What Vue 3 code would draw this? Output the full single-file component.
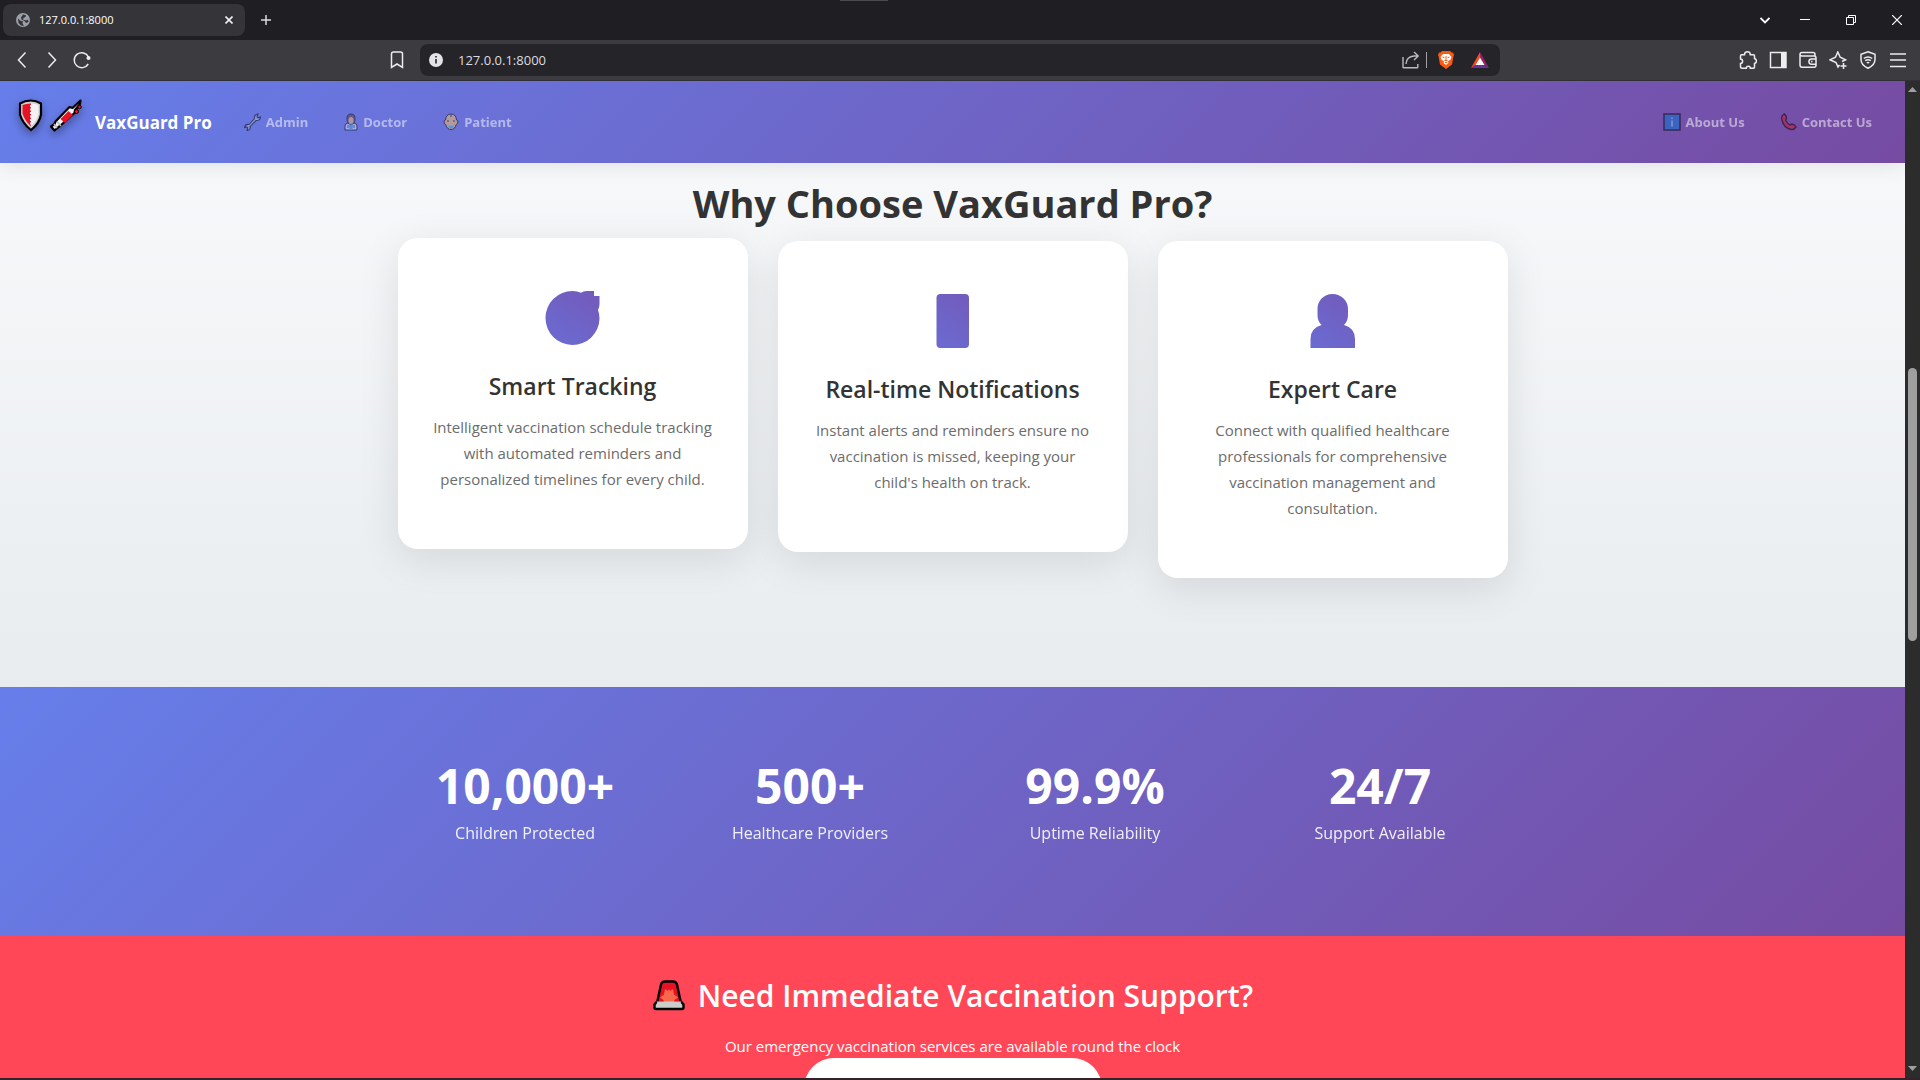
<script setup>
const features = [
  {
    icon: 'target',
    title: 'Smart Tracking',
    text: 'Intelligent vaccination schedule tracking with automated reminders and personalized timelines for every child.',
    lifted: true,
  },
  {
    icon: 'phone',
    title: 'Real-time Notifications',
    text: "Instant alerts and reminders ensure no vaccination is missed, keeping your child's health on track.",
  },
  {
    icon: 'person',
    title: 'Expert Care',
    text: 'Connect with qualified healthcare professionals for comprehensive vaccination management and consultation.',
  },
]

const stats = [
  { value: '10,000+', label: 'Children Protected' },
  { value: '500+', label: 'Healthcare Providers' },
  { value: '99.9%', label: 'Uptime Reliability' },
  { value: '24/7', label: 'Support Available' },
]
</script>

<template>
  <div class="browser">
    <div class="tabstrip">
      <div class="tab">
        <svg class="globe" width="14" height="14" viewBox="0 0 14 14">
          <circle cx="7" cy="7" r="7" fill="#9aa0a6" />
          <path d="M2 5.500 5 8l2 .3L6.500 10.500 8 13 5 12.500 2.500 10z M7 1.500 10 2.200 9.500 4 7.500 5 7 6.500 10 7.500 12 6.500 12.500 9 10 10 8.500 8 5.500 6.500 5 4.500z" fill="#35353a" />
        </svg>
        <span class="tab-title">127.0.0.1:8000</span>
        <button class="plain" aria-label="Close tab">
          <svg width="8" height="8" viewBox="0 0 8 8"><path d="M.5.5l7 7M7.500.5l-7 7" stroke="#f0f0f2" stroke-width="1.600" /></svg>
        </button>
      </div>
      <button class="plain new-tab" aria-label="New tab">
        <svg width="10" height="10" viewBox="0 0 10 10"><path d="M5 0v10M0 5h10" stroke="#dcdce0" stroke-width="1.500" /></svg>
      </button>
      <span class="grip"></span>
      <div class="window-controls">
        <button class="plain" aria-label="Search tabs">
          <svg width="10" height="10" viewBox="0 0 10 10"><path d="M.5 3 5 7.500 9.500 3" fill="none" stroke="#fff" stroke-width="1.800" /></svg>
        </button>
        <button class="plain" aria-label="Minimize">
          <svg width="10" height="10" viewBox="0 0 10 10"><path d="M0 4.500h10" stroke="#fff" /></svg>
        </button>
        <button class="plain" aria-label="Restore">
          <svg width="10" height="10" viewBox="0 0 10 10"><path d="M.5 2.500h7v7h-7zM2.500 2.500v-2h7v7h-2" fill="none" stroke="#fff" /></svg>
        </button>
        <button class="plain" aria-label="Close window">
          <svg width="10" height="10" viewBox="0 0 10 10"><path d="M0 0l10 10M10 0L0 10" stroke="#fff" stroke-width="1.200" /></svg>
        </button>
      </div>
    </div>

    <div class="toolbar">
      <div class="history">
        <button class="plain" aria-label="Back">
          <svg width="18" height="18" viewBox="0 0 18 18"><path d="M12.500 1.500 5.500 9l7 7.500" class="line" /></svg>
        </button>
        <button class="plain" aria-label="Forward">
          <svg width="18" height="18" viewBox="0 0 18 18"><path d="M5.500 1.500l7 7.500-7 7.500" class="line" /></svg>
        </button>
        <button class="plain" aria-label="Reload">
          <svg width="18" height="18" viewBox="0 0 18 18">
            <path d="M15.500 6A7.500 7.500 0 1 0 15.200 13" class="line" />
            <circle cx="15.500" cy="7" r="2" fill="#eee" />
          </svg>
        </button>
      </div>
      <button class="plain bookmark" aria-label="Bookmark">
        <svg width="14" height="18" viewBox="0 0 14 18"><path d="M1.500 16.500V3q0-2 2-2h7q2 0 2 2v13.500L7 13z" class="line" /></svg>
      </button>
      <div class="address">
        <svg width="14" height="14" viewBox="0 0 14 14">
          <circle cx="7" cy="7" r="7" fill="#e3e3e8" />
          <path d="M7 6v4.500M7 3v1.500" stroke="#252529" stroke-width="1.600" />
        </svg>
        <input id="address" aria-label="Address" value="127.0.0.1:8000" />
        <button class="plain" aria-label="Share">
          <svg width="18" height="18" viewBox="0 0 18 18">
            <path d="M1 6v10q0 .8.8.8H15q.8 0 .8-.8v-3M4 13q.5-7.500 8-8h4M12 1l4.200 4L12 9" fill="none" stroke="#b9b9bf" stroke-width="1.400" />
          </svg>
        </button>
        <span class="divider"></span>
        <button class="plain" aria-label="Shields">
          <svg width="16" height="18" viewBox="0 0 16 18">
            <path d="M4 0h8l1.500 1.600L15 1.500l1 2.500-.6 1.500L14 13.500 8 18l-6-4.500L.6 5.500 0 4l1-2.500 1.500.1z" fill="#fb5a12" />
            <path d="M5 3h6l2.500 3-1.200 3-2.300 1 .5 2L8 14l-2.500-2 .5-2-2.300-1L2.500 6z" fill="#fff" />
            <path d="M4.500 6l2 .8M11.500 6l-2 .8M8 5v4M6.500 9.500h3M7 11.500h2" stroke="#fb5a12" />
          </svg>
        </button>
        <button class="plain rewards" aria-label="Rewards">
          <svg width="18" height="16" viewBox="0 0 18 16">
            <path d="M9 0v5.500L4.500 13 0 16z" fill="#fb4a1e" />
            <path d="M9 0v5.500l4.500 7.500 4.500 3z" fill="#9c1f63" />
            <path d="M0 16l4.500-3h9l4.500 3z" fill="#6532a0" />
            <path d="M9 5.500 13.500 13h-9z" fill="#fff" />
          </svg>
        </button>
      </div>
      <div class="actions">
        <button class="plain" aria-label="Extensions">
          <svg width="18" height="18" viewBox="0 0 18 18"><path d="M2 3.800h3.500C5.500 1.500 6.800.8 8.500.8s2.800.9 2.800 3h3.200q1 0 1 1V7.500c2.600.8 2.600 4.200 0 5v3.700q-.3 1-1 1h-3.200c0-2.500-4-2.500-4 0H3q-1.500 0-1.500-1.200v-3.500c2.800-.2 2.800-4.400 0-4.500V5q0-1.200 1-1.200z" class="line" /></svg>
        </button>
        <button class="plain" aria-label="Sidebar">
          <svg width="18" height="18" viewBox="0 0 18 18"><rect x="1.500" y="1.500" width="15.500" height="15" class="line" /><path d="M12 1.500h5v15h-5z" fill="#eee" /></svg>
        </button>
        <button class="plain" aria-label="Wallet">
          <svg width="18" height="18" viewBox="0 0 18 18"><path d="M16 5V3.500q0-2-2-2H3q-2 0-2 2v10.500q0 2.200 2 2.200h12q2 0 2-2V7q0-2-2-2H3q-2 0-2-1.500M17 8h-4.500a2.600 2.600 0 0 0 0 5.200H17M12 10.600h1.500" class="line" /></svg>
        </button>
        <button class="plain" aria-label="Assistant">
          <svg width="18" height="18" viewBox="0 0 18 18"><path d="M10.500 14 9 16 7 11.500 1 8.800l5.500-2.600L8.800 1l2.400 5.200L16.500 8.800l-3.500 1.700M14.500 12v6M11.500 15h6" class="line" /></svg>
        </button>
        <button class="plain" aria-label="VPN">
          <svg width="18" height="18" viewBox="0 0 18 18"><path d="M9 .8l7 2.400v5.300q0 5.500-7 8.700-7-3.200-7-8.700V3.200zM4.800 7.500q4.200-3 8.400 0M6.200 9.700q2.800-2 5.600 0M7.800 11.800q1.200-.8 2.400 0" class="line" /></svg>
        </button>
        <button class="plain" aria-label="Menu">
          <svg width="18" height="18" viewBox="0 0 18 18"><path d="M1 3h16M1 9h16M1 15.500h16" class="line" /></svg>
        </button>
      </div>
    </div>

    <div class="viewport">
      <div class="page">
        <nav class="navbar">
          <a href="#" class="brand">
            <svg class="logo" width="66" height="34" viewBox="0 0 66 34">
              <path d="M14 2.500Q19 2.500 24 5.500v11Q22.500 25.500 14 32 5.500 25.500 3 16.500V5.500Q8 2.500 14 2.500z" fill="#cfcfcf" stroke="#000" stroke-width="2.200" />
              <path d="M14 5.500v23Q7.500 22.500 5.500 15.500V7Q9 5.500 14 5.500z" fill="#e81224" />
              <path d="M14 5.500q4.500 0 7.500 1.500v8.500Q20 22.500 14 28.500z" fill="#f2f2f2" />
              <path d="M14 7v20" stroke="#f2f2f2" stroke-width="2" stroke-dasharray="2 1.500" />
              <path d="M63.500 2.500 55.500 10l-3-1L38.500 23.500l-1 2.500-3.500 2.500 3.500 4 3.500-3 2-1.500L57.500 15 58 12l5-6z" fill="#f2f2f2" stroke="#000" stroke-width="2.200" stroke-linejoin="round" />
              <path d="M43.500 21 51.500 13l4.500 4-8 8z" fill="#e81224" />
              <path d="M37 26l3 4M40 23.500l4 4.500" stroke="#bbb" stroke-width="1.500" />
              <circle cx="62.500" cy="9" r="1.800" fill="#e81224" stroke="#000" />
              <circle cx="59.500" cy="13.500" r="2" fill="#e81224" stroke="#000" />
            </svg>
            VaxGuard Pro
          </a>
          <div class="nav-group">
            <a href="#" class="nav-link">
              <svg width="17" height="18" viewBox="0 0 17 18">
                <path d="M10.500 5.500Q10 1.500 14 1l-1 2.800 1 1 2.500-.8Q16 8 12 7.500l-6 6.200q.8 3.300-3 3.800l.8-2.500-1-1L.5 14.500Q1.500 10.800 5 11.500z" fill="#a9bcd4" stroke="#000" stroke-width="1.100" />
              </svg>
              Admin
            </a>
            <a href="#" class="nav-link">
              <svg width="14" height="18" viewBox="0 0 14 18">
                <path d="M1 17v-4q0-2.500 3-3h6q3 .5 3 3v4z" fill="#e8e8ee" stroke="#000" />
                <path d="M3 6.500Q2.500 1 7 1t4 5.500Q10.500 11.500 7 11.500T3 6.500z" fill="#603d2c" stroke="#000" />
                <ellipse cx="7" cy="7.500" rx="2.600" ry="3.600" fill="#f0b377" />
                <path d="M5 11.500h4L8.500 17h-3z" fill="#31a9e8" />
                <path d="M4 12v3M10 12v3" stroke="#333" />
              </svg>
              Doctor
            </a>
            <a href="#" class="nav-link">
              <svg width="16" height="18" viewBox="0 0 16 18">
                <path d="M8 1q5 0 5.500 6 1.500.2 1.500 2t-1.800 2.500Q12 16.500 8 16.500t-5.200-5Q1 11 1 9t1.500-2Q3 1 8 1z" fill="#ffc25a" stroke="#000" />
                <path d="M8 2v2M5 7v2M11 7v2" stroke="#333" stroke-width="1.200" />
                <path d="M5.500 12.500 8 13l2.500-.5v2L8 15.500l-2.500-1z" fill="#31b8f5" />
              </svg>
              Patient
            </a>
          </div>
          <div class="nav-group end">
            <a href="#" class="nav-link">
              <svg width="18" height="18" viewBox="0 0 18 18">
                <rect x="1" y="1" width="16" height="16" fill="#0078d7" stroke="#000" stroke-width="1.500" />
                <path d="M9 7.500v6M9 4.500v1.500" stroke="#fff" />
              </svg>
              About Us
            </a>
            <a href="#" class="nav-link">
              <svg width="16" height="18" viewBox="0 0 16 18">
                <path d="M3 1Q5.500 2 5.500 5.500L4.500 7q1.500 3.500 4.500 5l2-1q3 .5 4 3-2 3-5 2.500Q2.500 14.500 1 7-.2 3 3 1z" fill="#e81224" stroke="#000" stroke-width="1.400" />
              </svg>
              Contact Us
            </a>
          </div>
        </nav>

        <section class="features">
          <h2>Why Choose VaxGuard Pro?</h2>
          <div class="cards">
            <article v-for="f in features" :key="f.title" class="card" :class="{ lifted: f.lifted }">
              <svg class="feature-icon" width="64" height="64" viewBox="0 0 64 64">
                <defs>
                  <linearGradient :id="'fill-' + f.icon" gradientUnits="userSpaceOnUse" x1="6" y1="64" x2="48" y2="0">
                    <stop offset="0" stop-color="#6a6dd4" />
                    <stop offset="1" stop-color="#735aba" />
                  </linearGradient>
                </defs>
                <path v-if="f.icon === 'target'" fill="url(#fill-target)" d="M31.500 5q4.500 0 8.500 1.800Q42.500 5 45.500 5h7.500v5h5.500v8q0 3.500-1.500 6 1.500 4 1.500 8.500A27 27 0 1 1 31.500 5z" />
                <rect v-else-if="f.icon === 'phone'" fill="url(#fill-phone)" x="15.500" y="5" width="32.500" height="54" rx="4" />
                <path v-else fill="url(#fill-person)" d="M31.500 5c9 0 15.500 7 15.500 15v6q0 6-4 10 11 3 11 14v9H9.500v-9q0-11 11-14-4-4-4-10v-6c0-8 6-15 15-15z" />
              </svg>
              <h3>{{ f.title }}</h3>
              <p>{{ f.text }}</p>
            </article>
          </div>
        </section>

        <section class="stats">
          <div class="stats-row">
            <div v-for="s in stats" :key="s.label" class="stat">
              <div class="stat-value">{{ s.value }}</div>
              <div class="stat-label">{{ s.label }}</div>
            </div>
          </div>
        </section>

        <section class="emergency">
          <h2>
            <svg width="34" height="32" viewBox="0 0 34 32">
              <path d="M5 23 9 4.500q.8-3 4-3h8q3.200 0 4 3L29 23z" fill="#e81224" stroke="#000" stroke-width="2.400" />
              <path d="M17 24h-5l-.5-4L8 17.500l4-3L13 9l3 2 1-2 1 2 3-2 1 5.500 4 3-3.500 2.500L22 24z" fill="#f7694b" />
              <path d="M5 21.500h24l2 2v3q0 1.500-1.500 1.500h-25Q3 28 3 26.500v-3z" fill="#ccc" />
              <path d="M4.500 22 2.500 24.500v3Q2.500 29 4 29h26q1.500 0 1.500-1.500v-3l-2-2.500" fill="none" stroke="#000" stroke-width="2.400" />
            </svg>
            Need Immediate Vaccination Support?
          </h2>
          <p>Our emergency vaccination services are available round the clock</p>
          <button class="call" aria-label="Call emergency support"></button>
        </section>
      </div>

      <div class="scrollbar">
        <svg width="9" height="5" viewBox="0 0 9 5"><path d="M4.500 0 9 5H0z" fill="#9f9f9f" /></svg>
        <div class="track"><div class="thumb"></div></div>
        <svg width="9" height="5" viewBox="0 0 9 5"><path d="M4.500 5 9 0H0z" fill="#9f9f9f" /></svg>
      </div>
    </div>
    <div class="edge"></div>
  </div>
</template>

<style>
body {
  margin: 0;
}
</style>

<style scoped>
* {
  box-sizing: border-box;
}

.browser {
  display: flex;
  flex-direction: column;
  height: 100vh;
  overflow: hidden;
  font-family: "Segoe UI", "Open Sans", "Noto Sans", sans-serif;
}

svg {
  display: block;
  flex: none;
}

h2,
h3,
p {
  margin: 0;
}

.plain {
  display: flex;
  padding: 0;
  border: 0;
  background: none;
}

.line {
  fill: none;
  stroke: #ececef;
  stroke-width: 1.5;
}

.tabstrip {
  position: relative;
  flex: none;
  display: flex;
  align-items: center;
  height: 40px;
  padding: 0 18px 0 3px;
  background: #1f1e23;
}

.tab {
  display: flex;
  align-items: center;
  width: 242px;
  height: 32px;
  padding: 0 12px 0 13px;
  border-radius: 8px;
  background: #353439;
}

.tab-title {
  flex: 1;
  margin-left: 9px;
  font-size: 11px;
  line-height: 16px;
  color: #fff;
}

.new-tab {
  margin-left: 16px;
}

.grip {
  position: absolute;
  top: 0;
  left: 50%;
  width: 48px;
  height: 1px;
  margin-left: -120px;
  background: #4a4a4f;
}

.window-controls {
  display: flex;
  gap: 36px;
  margin-left: auto;
}

.window-controls button:first-child {
  margin-right: -6px;
}

.toolbar {
  flex: none;
  display: flex;
  align-items: center;
  height: 41px;
  padding: 0 13px;
  border-bottom: 1px solid #313135;
  background: #3c3b40;
}

.history {
  display: flex;
  gap: 12px;
}

.bookmark {
  margin-left: auto;
}

.address {
  display: flex;
  align-items: center;
  width: 1080px;
  height: 32px;
  margin: 0 239px 0 16px;
  padding: 0 11px 0 9px;
  border-radius: 8px;
  background: #252429;
}

.address input {
  flex: 1;
  min-width: 0;
  margin-left: 15px;
  padding: 0;
  border: 0;
  background: none;
  color: #dcdce0;
  font: 13px/20px "Segoe UI", "Open Sans", "Noto Sans", sans-serif;
}

.divider {
  width: 1px;
  height: 16px;
  margin: 0 11px 0 6px;
  background: #a0a0a5;
}

.rewards {
  margin-left: 17px;
}

.actions {
  display: flex;
  gap: 12px;
}

.viewport {
  flex: 1;
  display: flex;
  min-height: 0;
}

.page {
  flex: 1;
  min-width: 0;
  overflow: hidden;
  background: #ff4757;
}

.navbar {
  position: relative;
  z-index: 1;
  display: flex;
  align-items: center;
  gap: 32px;
  height: 82px;
  padding: 0 33px 0 17px;
  background: linear-gradient(135deg, #667eea 0%, #764ba2 100%);
  box-shadow: 0 2px 20px rgba(0, 0, 0, 0.1);
}

.brand {
  display: flex;
  align-items: center;
  gap: 12px;
  color: #fff;
  font-size: 17px;
  font-weight: 700;
  text-decoration: none;
}

.logo {
  margin-bottom: 14px;
  filter: drop-shadow(0 4px 4px rgba(0, 0, 0, 0.35));
}

.nav-group {
  display: flex;
  gap: 36px;
}

.nav-group.end {
  margin-left: auto;
}

.nav-link {
  display: flex;
  align-items: center;
  gap: 5px;
  color: #fff;
  font-size: 13px;
  font-weight: 700;
  text-decoration: none;
  opacity: 0.5;
}

.features {
  padding: 14px 0 109px;
  background: linear-gradient(180deg, #f7f8fa 0%, #e8ecef 100%);
  text-align: center;
}

.features h2 {
  color: #333;
  font-size: 38px;
  font-weight: 700;
  line-height: 52px;
}

.cards {
  display: flex;
  justify-content: center;
  align-items: flex-start;
  gap: 30px;
  margin-top: 12px;
}

.card {
  width: 350px;
  padding: 48px 30px 57px;
  border-radius: 20px;
  background: #fff;
  box-shadow: 0 10px 40px rgba(0, 0, 0, 0.1);
}

.card.lifted {
  transform: translateY(-3px);
}

.feature-icon {
  margin: 0 auto;
}

.card h3 {
  margin: 18px 0 10px;
  color: #333;
  font-size: 23px;
  font-weight: 600;
  line-height: 36px;
}

.card p {
  color: #6c6c6c;
  font-size: 15px;
  line-height: 26px;
}

.stats {
  padding: 70px 0 89px;
  background: linear-gradient(135deg, #667eea 0%, #764ba2 100%);
  color: #fff;
  text-align: center;
}

.stats-row {
  display: flex;
  max-width: 1140px;
  margin: 0 auto;
}

.stat {
  flex: 1;
}

.stat-value {
  font-size: 48px;
  font-weight: 700;
  line-height: 58px;
}

.stat-label {
  margin-top: 4px;
  font-size: 16px;
  line-height: 28px;
  opacity: 0.9;
}

.emergency {
  display: flex;
  flex-direction: column;
  align-items: center;
  padding: 38px 0 40px;
  background: #ff4757;
  color: #fff;
}

.emergency h2 {
  display: flex;
  align-items: center;
  gap: 12px;
  font-size: 30px;
  font-weight: 600;
  line-height: 44px;
}

.emergency p {
  margin-top: 16px;
  font-size: 15px;
  line-height: 24px;
}

.call {
  width: 298px;
  height: 60px;
  border: 0;
  border-radius: 30px;
  background: #fff;
}

.scrollbar {
  flex: none;
  display: flex;
  flex-direction: column;
  align-items: center;
  gap: 4px;
  width: 15px;
  padding: 6px 0 7px;
  background: #2c2c2c;
}

.track {
  flex: 1;
  display: flex;
  flex-direction: column;
}

.track::before {
  content: "";
  flex: 274 0 0;
}

.track::after {
  content: "";
  flex: 424 0 0;
}

.thumb {
  flex: 276 0 0;
  width: 9px;
  border-radius: 5px;
  background: #9f9f9f;
}

.edge {
  flex: none;
  height: 2px;
  background: #33222a;
}
</style>
